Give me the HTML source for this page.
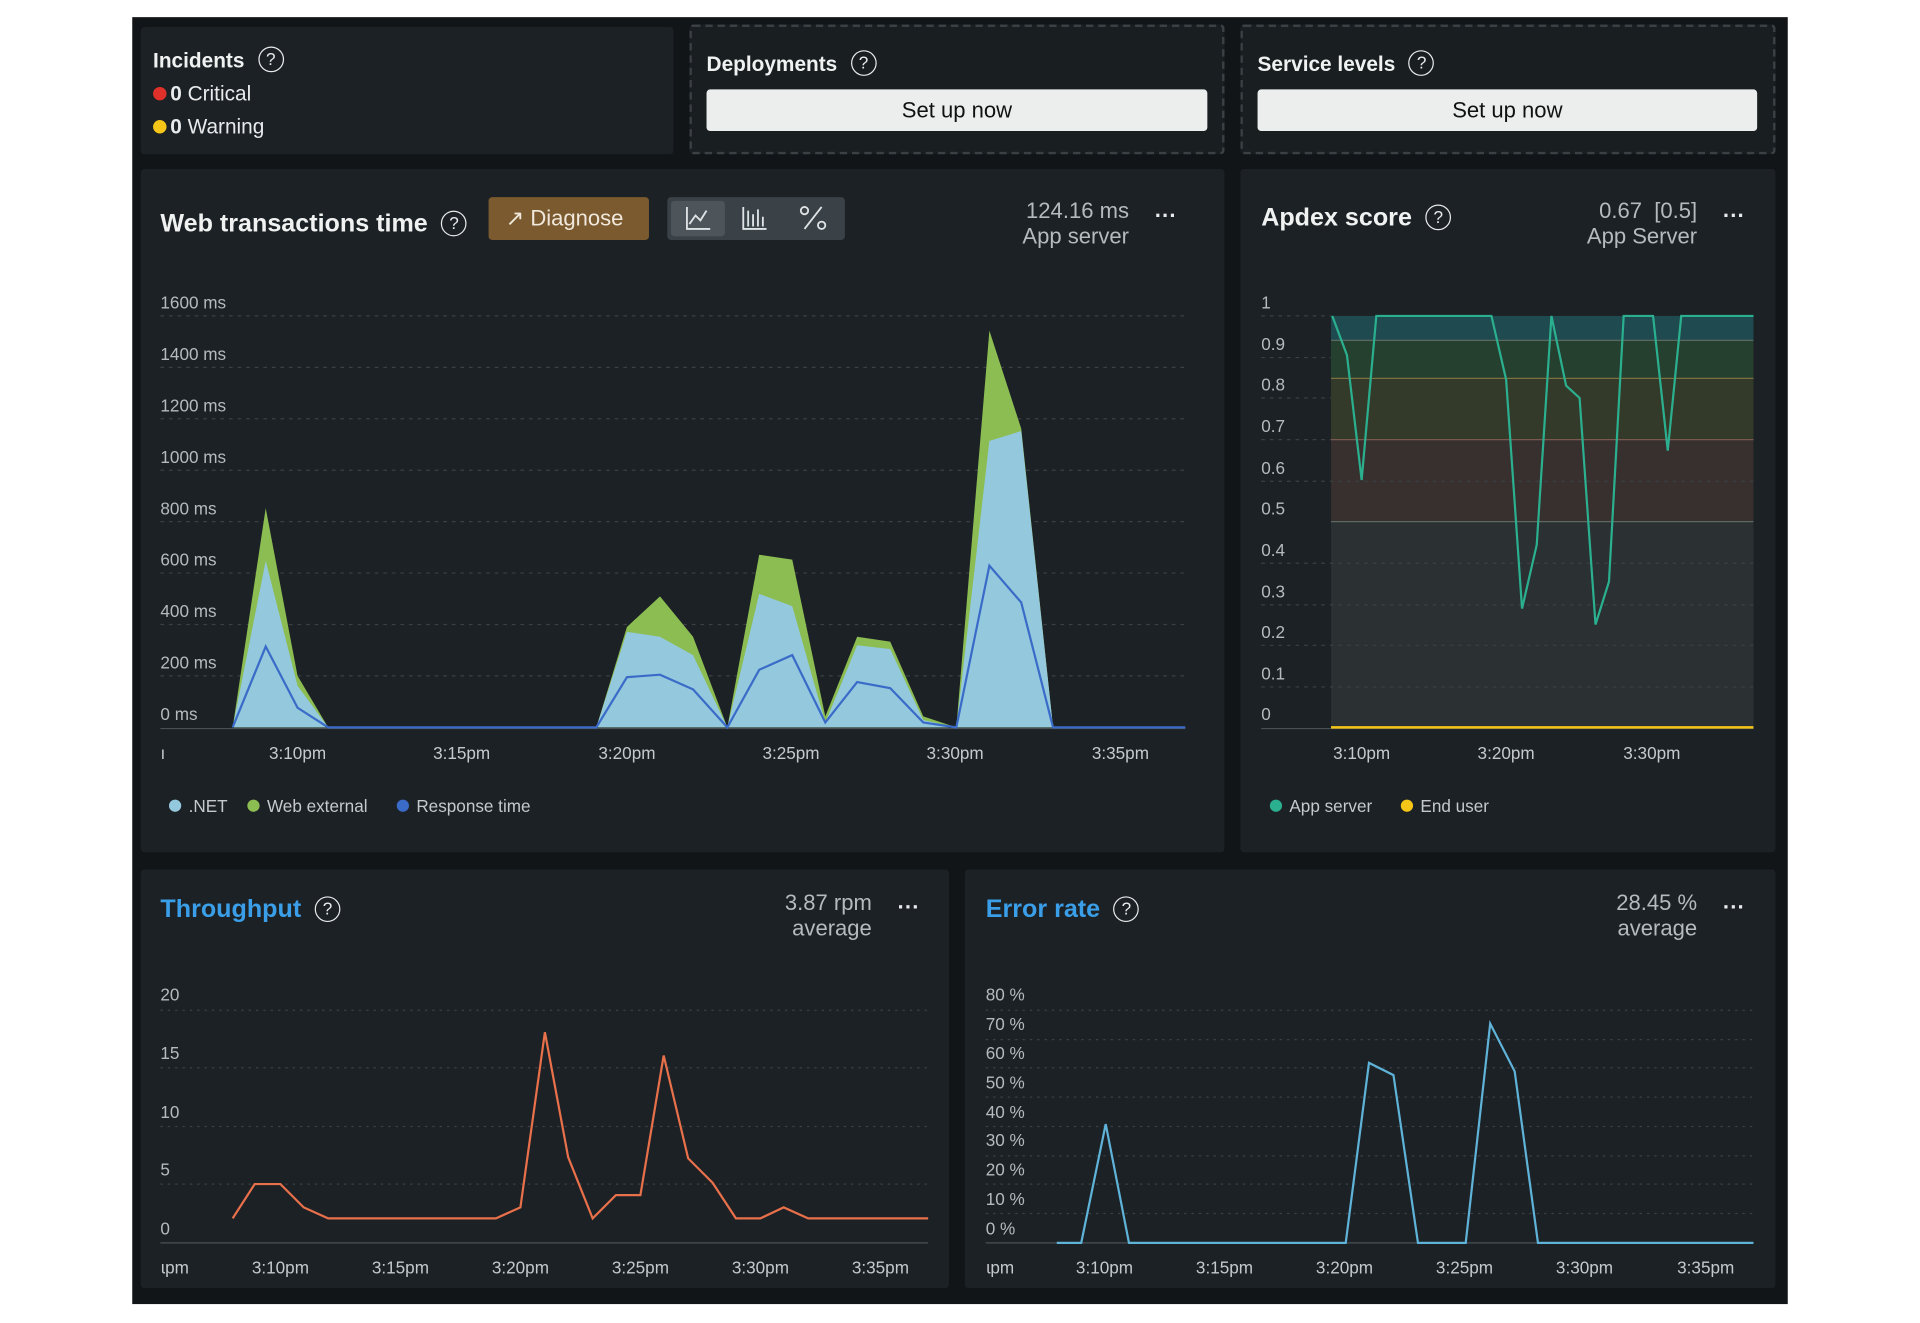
<!DOCTYPE html>
<html><head><meta charset="utf-8"><style>
html,body{margin:0;padding:0;background:#fff;width:1920px;height:1323px;overflow:hidden}
#s{position:absolute;left:0;top:0;width:1568px;height:1080px;transform:scale(1.22449);transform-origin:0 0;font-family:"Liberation Sans",sans-serif;color:#e8eaeb}
.frame{position:absolute;left:108px;top:14px;width:1352px;height:1051px;background:#111518}
.card{position:absolute;background:#1c2125;border-radius:3px}
.dash{position:absolute;border:2px dashed #3a4044;border-radius:3px;background:#191e21}
.t{position:absolute;font-size:18px;font-weight:bold;color:#f0f2f2;white-space:nowrap}
.btn{position:absolute;background:#eceeee;color:#111;border-radius:3px;font-size:18px;text-align:center;line-height:34px}
.q{display:inline-block;width:19px;height:19px;border:1.6px solid #e8eaeb;border-radius:50%;font-size:14px;line-height:19px;text-align:center;font-weight:normal;vertical-align:2px;margin-left:11px;color:#e8eaeb}
</style></head><body><div id="s">
<div class="frame"></div>
<div class="card" style="left:115px;top:22px;width:435px;height:104px"></div>
<div class="dash" style="left:563px;top:20px;width:433px;height:102px"></div>
<div class="dash" style="left:1013px;top:20px;width:433px;height:102px"></div>
<div class="card" style="left:115px;top:138px;width:885px;height:558px"></div>
<div class="card" style="left:1013px;top:138px;width:437px;height:558px"></div>
<div class="card" style="left:115px;top:710px;width:660px;height:342px"></div>
<div class="card" style="left:788px;top:710px;width:662px;height:342px"></div>

<div class="t" style="left:125px;top:38px;font-size:17px">Incidents<span class="q">?</span></div>
<div style="position:absolute;left:125px;top:67px;font-size:17px"><span style="display:inline-block;width:11px;height:11px;border-radius:50%;background:#e0302a;margin-right:3px"></span><b>0</b> Critical</div>
<div style="position:absolute;left:125px;top:94px;font-size:17px"><span style="display:inline-block;width:11px;height:11px;border-radius:50%;background:#f5c518;margin-right:3px"></span><b>0</b> Warning</div>
<div class="t" style="left:577px;top:41px;font-size:17px">Deployments<span class="q">?</span></div>
<div class="btn" style="left:577px;top:73px;width:409px">Set up now</div>
<div class="t" style="left:1027px;top:41px;font-size:17px">Service levels<span class="q">?</span></div>
<div class="btn" style="left:1027px;top:73px;width:408px">Set up now</div>

<div class="t" style="left:131px;top:171px;font-size:20.5px">Web transactions time<span class="q">?</span></div>
<div style="position:absolute;left:399px;top:161px;width:131px;height:35px;background:#7a5a2e;border-radius:3px;font-size:18px;line-height:35px;color:#f0e8dc"><span style="margin-left:14px">↗</span> Diagnose</div>
<div style="position:absolute;left:545px;top:161px;width:145px;height:35px;background:#3a4147;border-radius:3px"></div>
<div style="position:absolute;left:548px;top:164px;width:44px;height:29px;background:#4d555b;border-radius:3px"></div>
<svg style="position:absolute;left:545px;top:161px" width="145" height="35"><g stroke="#dfe3e5" fill="none" stroke-width="1.5"><path d="M16 8v18h19M18 22l5-7 4 4 5-8"/><path d="M62 8v18h19M66 11v13M70 14v10M74 10v14M78 16v8"/><path d="M112 26l14-18"/><circle cx="112" cy="11" r="3"/><circle cx="126" cy="23" r="3"/></g></svg>
<div style="position:absolute;left:800px;top:162px;width:122px;text-align:right;font-size:18px;color:#b4babd;line-height:21px">124.16 ms<br>App server</div>
<div style="position:absolute;left:943px;top:166px;font-size:18px;font-weight:bold">···</div>

<div class="t" style="left:1030px;top:166px;font-size:20.5px">Apdex score<span class="q">?</span></div>
<div style="position:absolute;left:1250px;top:162px;width:136px;text-align:right;font-size:18px;color:#b4babd;line-height:21px">0.67&nbsp; [0.5]<br>App Server</div>
<div style="position:absolute;left:1407px;top:166px;font-size:18px;font-weight:bold">···</div>

<div class="t" style="left:131px;top:731px;font-size:20.5px;color:#3a9fe8">Throughput<span class="q">?</span></div>
<div style="position:absolute;left:600px;top:727px;width:112px;text-align:right;font-size:18px;color:#b4babd;line-height:21px">3.87 rpm<br>average</div>
<div style="position:absolute;left:733px;top:731px;font-size:18px;font-weight:bold">···</div>
<div class="t" style="left:805px;top:731px;font-size:20.5px;color:#3a9fe8">Error rate<span class="q">?</span></div>
<div style="position:absolute;left:1270px;top:727px;width:116px;text-align:right;font-size:18px;color:#b4babd;line-height:21px">28.45 %<br>average</div>
<div style="position:absolute;left:1407px;top:731px;font-size:18px;font-weight:bold">···</div>

<svg style="position:absolute;left:0;top:0" width="1568" height="1080" font-family="Liberation Sans, sans-serif">
<g fill="#b4babd" font-size="14">
<text x="131" y="252">1600 ms</text><text x="131" y="294">1400 ms</text><text x="131" y="336">1200 ms</text><text x="131" y="378">1000 ms</text><text x="131" y="420">800 ms</text><text x="131" y="462">600 ms</text><text x="131" y="504">400 ms</text><text x="131" y="546">200 ms</text><text x="131" y="588">0 ms</text>
</g>
<g stroke="#3a4044" stroke-dasharray="3 4"><path d="M131 258H968M131 300H968M131 342H968M131 384H968M131 426H968M131 468H968M131 510H968M131 552H968"/></g>
<path d="M131 595H968" stroke="#4a5155"/>
<polygon fill="#8cbd52" points="190,594 217,415 243,552 268,594 487,594 512,512 539,487 566,520 594,594 620,453 647,457 674,585 700,520 727,524 754,585 781,594 808,270 834,350 860,594"/>
<polygon fill="#94c8dc" points="190,594 217,458 243,560 268,594 487,594 512,516 539,520 566,535 594,594 620,485 647,495 674,590 700,527 727,530 754,588 781,594 808,360 834,352 860,594"/>
<polyline fill="none" stroke="#3a6bc8" stroke-width="1.8" points="190,594 217,528 243,578 268,594 487,594 512,553 539,551 566,563 594,594 620,547 647,535 674,590 700,557 727,562 754,590 781,594 808,462 834,492 860,594 968,594"/>
<g fill="#c4c9cc" font-size="14" text-anchor="middle"><text x="133" y="620">ı</text><text x="243" y="620">3:10pm</text><text x="377" y="620">3:15pm</text><text x="512" y="620">3:20pm</text><text x="646" y="620">3:25pm</text><text x="780" y="620">3:30pm</text><text x="915" y="620">3:35pm</text></g>
<g font-size="14" fill="#c4c9cc"><circle cx="143" cy="658" r="5" fill="#94c8dc"/><text x="154" y="663">.NET</text><circle cx="207" cy="658" r="5" fill="#8cbd52"/><text x="218" y="663">Web external</text><circle cx="329" cy="658" r="5" fill="#3a6bc8"/><text x="340" y="663">Response time</text></g>

<rect x="1087" y="258" width="345" height="20" fill="#1f4a50"/>
<rect x="1087" y="278" width="345" height="31" fill="#26402f"/>
<rect x="1087" y="309" width="345" height="50" fill="#343a2a"/>
<rect x="1087" y="359" width="345" height="67" fill="#382f2f"/>
<rect x="1087" y="426" width="345" height="169" fill="#2b3033"/>
<g stroke="#5a6a60" stroke-width="1"><path d="M1087 278H1432M1087 426H1432"/></g><path d="M1087 309H1432" stroke="#7a7040"/><path d="M1087 359H1432" stroke="#7a5a50"/>
<g stroke="#3a4044" stroke-dasharray="3 4"><path d="M1030 258H1087M1030 292H1087M1030 325H1087M1030 359H1087M1030 393H1432M1030 460H1432M1030 494H1432M1030 527H1432M1030 561H1432"/></g>
<path d="M1030 595H1432" stroke="#4a5155"/>
<g fill="#b4babd" font-size="14"><text x="1030" y="252">1</text><text x="1030" y="286">0.9</text><text x="1030" y="319">0.8</text><text x="1030" y="353">0.7</text><text x="1030" y="387">0.6</text><text x="1030" y="420">0.5</text><text x="1030" y="454">0.4</text><text x="1030" y="488">0.3</text><text x="1030" y="521">0.2</text><text x="1030" y="555">0.1</text><text x="1030" y="588">0</text></g>
<polyline fill="none" stroke="#2bb08f" stroke-width="1.8" points="1088,258 1100,290 1112,392 1124,258 1218,258 1230,310 1243,497 1255,445 1267,258 1279,315 1290,325 1303,510 1314,475 1326,258 1350,258 1362,368 1373,258 1432,258"/>
<path d="M1087 594H1432" stroke="#f5c518" stroke-width="2"/>
<g fill="#c4c9cc" font-size="14" text-anchor="middle"><text x="1112" y="620">3:10pm</text><text x="1230" y="620">3:20pm</text><text x="1349" y="620">3:30pm</text></g>
<g font-size="14" fill="#c4c9cc"><circle cx="1042" cy="658" r="5" fill="#2bb08f"/><text x="1053" y="663">App server</text><circle cx="1149" cy="658" r="5" fill="#f5c518"/><text x="1160" y="663">End user</text></g>

<g fill="#b4babd" font-size="14"><text x="131" y="817">20</text><text x="131" y="865">15</text><text x="131" y="913">10</text><text x="131" y="960">5</text><text x="131" y="1008">0</text></g>
<g stroke="#3a4044" stroke-dasharray="2 4"><path d="M131 825H758M131 872H758M131 920H758M131 967H758"/></g>
<path d="M131 1015H758" stroke="#4a5155"/>
<polyline fill="none" stroke="#e8704a" stroke-width="1.8" points="190,995 208,967 229,967 248,986 268,995 405,995 425,986 445,843 464,945 484,995 503,976 523,976 542,862 562,946 582,966 601,995 621,995 640,986 660,995 758,995"/>
<g fill="#c4c9cc" font-size="14" text-anchor="middle"><text x="143" y="1040">ɩpm</text><text x="229" y="1040">3:10pm</text><text x="327" y="1040">3:15pm</text><text x="425" y="1040">3:20pm</text><text x="523" y="1040">3:25pm</text><text x="621" y="1040">3:30pm</text><text x="719" y="1040">3:35pm</text></g>

<g fill="#b4babd" font-size="14"><text x="805" y="817">80 %</text><text x="805" y="841">70 %</text><text x="805" y="865">60 %</text><text x="805" y="889">50 %</text><text x="805" y="913">40 %</text><text x="805" y="936">30 %</text><text x="805" y="960">20 %</text><text x="805" y="984">10 %</text><text x="805" y="1008">0 %</text></g>
<g stroke="#3a4044" stroke-dasharray="2 4"><path d="M805 825H1432M805 849H1432M805 872H1432M805 896H1432M805 920H1432M805 944H1432M805 967H1432M805 991H1432"/></g>
<path d="M805 1015H1432" stroke="#4a5155"/>
<polyline fill="none" stroke="#5fb3d9" stroke-width="1.8" points="863,1015 883,1015 903,918 922,1015 1099,1015 1118,868 1138,878 1158,1015 1197,1015 1217,836 1237,875 1256,1015 1432,1015"/>
<g fill="#c4c9cc" font-size="14" text-anchor="middle"><text x="817" y="1040">ɩpm</text><text x="902" y="1040">3:10pm</text><text x="1000" y="1040">3:15pm</text><text x="1098" y="1040">3:20pm</text><text x="1196" y="1040">3:25pm</text><text x="1294" y="1040">3:30pm</text><text x="1393" y="1040">3:35pm</text></g>
</svg>
</div></body></html>
